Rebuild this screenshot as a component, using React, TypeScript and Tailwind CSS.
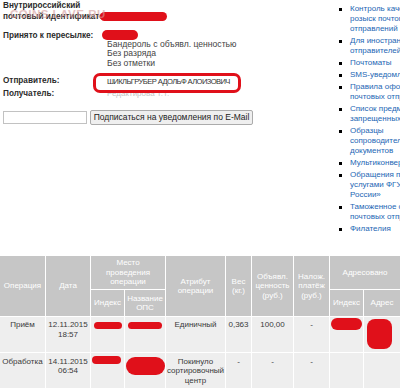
import React from "react";

const links: string[][] = [
  ["Контроль качества и", "розыск почтовых", "отправлений"],
  ["Для иностранных", "отправителей"],
  ["Почтоматы"],
  ["SMS-уведомления"],
  ["Правила оформления", "почтовых отправлений"],
  ["Список предметов,", "запрещенных к пересылке"],
  ["Образцы", "сопроводительных", "документов"],
  ["Мультиконверт"],
  ["Обращения по", "услугами ФГУП «Почта", "России»"],
  ["Таможенное оформление", "почтовых отправлений"],
  ["Филателия"],
];

const head = "bg-[#c6c6c6] text-white font-normal text-center align-middle leading-[9.5px] p-0";
const cell = "bg-[#eeeeee] text-[#3a3a3a] text-center align-top leading-[9.5px] p-0";
const red = "bg-[#e0101a]";

export default function App() {
  return (
    <div className="w-[400px] h-[390px] overflow-hidden bg-white font-['Liberation_Sans',Arial,sans-serif] text-[8px] text-[#2b2b2b]">
      <div className="flex">
        {/* tracking details */}
        <div className="w-[335px] shrink-0 pl-[3px] relative">
          <div className="flex leading-[11px]">
            <div className="w-[97px] shrink-0 font-bold text-[8.2px] whitespace-nowrap">
              Внутрироссийский
              <br />
              почтовый идентификатор:
            </div>
            <div className="pt-[11.5px]">
              <div className={`w-[67px] h-[9px] rounded-full ${red}`} />
            </div>
          </div>

          <div className="flex mt-[7.5px]">
            <div className="w-[99px] shrink-0 font-bold text-[8.2px] leading-[11px] whitespace-nowrap">Принято к пересылке:</div>
            <div>
              <div className={`w-[36px] h-[10px] rounded-full ${red}`} />
              <div className="pl-[5px] leading-[9.5px] text-[8.6px] text-[#444] whitespace-nowrap">
                Бандероль с объявл. ценностью
                <br />
                Без разряда
                <br />
                Без отметки
              </div>
            </div>
          </div>

          <div className="flex mt-[6.5px]">
            <div className="w-[104px] shrink-0 font-bold text-[8.2px] leading-[11px]">Отправитель:</div>
            <div className="relative pt-[1px] leading-[11px] text-[7.6px] tracking-[-0.6px] text-[#333] whitespace-nowrap">
              ШИКЛЬГРУБЕР АДОЛЬФ АЛОИЗОВИЧ
              <div className="absolute top-[-1.5px] left-[-14px] w-[148px] h-[20px] border-[3px] border-[#e0101a] rounded-[7px]" />
            </div>
          </div>

          <div className="flex mt-[1px]">
            <div className="w-[104px] shrink-0 font-bold text-[8.2px] leading-[11px]">Получатель:</div>
            <div className="leading-[11px] text-[#c4c4c4] whitespace-nowrap">Редактирова Т.Т.</div>
          </div>

          <div className="flex items-center mt-[11.5px]">
            <input className="w-[84px] h-[13px] border border-[#c2c2c2] bg-white outline-none" />
            <button className="ml-[3px] w-[163px] h-[15px] border border-[#ababab] bg-[#efefef] rounded-[2px] text-[8.5px] leading-[13px] text-[#222]">
              Подписаться на уведомления по E-Mail
            </button>
          </div>

          <div className="absolute left-[10px] top-[7px] text-[11.5px] leading-[14px] font-bold tracking-[0.5px] text-[#d49a9a] opacity-60 pointer-events-none">
            COINS.LAVE.RU
          </div>
        </div>

        {/* side menu */}
        <ul className="w-[130px] shrink-0 pt-[4px]">
          {links.map((lines, i) => (
            <li key={i} className="flex mb-[2px] leading-[10px]">
              <span className="w-[3px] h-[3px] bg-black mt-[4px] ml-[4px] mr-[8px] shrink-0" />
              <span className="text-[#2366b4] whitespace-nowrap">
                {lines.map((l, j) => (
                  <React.Fragment key={j}>
                    {j > 0 && <br />}
                    {l}
                  </React.Fragment>
                ))}
              </span>
            </li>
          ))}
        </ul>
      </div>

      <table className="table-fixed border-separate border-spacing-[1px] w-[402px] -ml-[1px] mt-[19px]">
        <colgroup>
          <col className="w-[45px]" />
          <col className="w-[44px]" />
          <col className="w-[33px]" />
          <col className="w-[40px]" />
          <col className="w-[59px]" />
          <col className="w-[25px]" />
          <col className="w-[41px]" />
          <col className="w-[35px]" />
          <col className="w-[33px]" />
          <col className="w-[36px]" />
        </colgroup>
        <thead>
          <tr className="h-[33px]">
            <th rowSpan={2} className={head}>Операция</th>
            <th rowSpan={2} className={head}>Дата</th>
            <th colSpan={2} className={head}>
              Место
              <br />
              проведения
              <br />
              операции
            </th>
            <th rowSpan={2} className={head}>
              Атрибут
              <br />
              операции
            </th>
            <th rowSpan={2} className={head}>
              Вес
              <br />
              (кг.)
            </th>
            <th rowSpan={2} className={head}>
              Объявл.
              <br />
              ценность
              <br />
              (руб.)
            </th>
            <th rowSpan={2} className={head}>
              Налож.
              <br />
              платёж
              <br />
              (руб.)
            </th>
            <th colSpan={2} className={head}>Адресовано</th>
          </tr>
          <tr className="h-[26px]">
            <th className={head}>Индекс</th>
            <th className={head}>
              Название
              <br />
              ОПС
            </th>
            <th className={head}>Индекс</th>
            <th className={head}>Адрес</th>
          </tr>
        </thead>
        <tbody>
          <tr className="h-[35px]">
            <td className={`${cell} pt-[3px]`}>Приём</td>
            <td className={`${cell} pt-[3px]`}>
              12.11.2015
              <br />
              18:57
            </td>
            <td className={cell}>
              <div className={`mx-auto mt-[5px] w-[28px] h-[7px] rounded-full ${red}`} />
            </td>
            <td className={cell}>
              <div className={`mx-auto mt-[5px] w-[34px] h-[7px] rounded-full ${red}`} />
            </td>
            <td className={`${cell} pt-[3px]`}>Единичный</td>
            <td className={`${cell} pt-[3px]`}>0,363</td>
            <td className={`${cell} pt-[3px]`}>100,00</td>
            <td className={`${cell} pt-[3px]`}>-</td>
            <td className={cell}>
              <div className={`mx-auto mt-[1px] w-[31px] h-[12px] rounded-full ${red}`} />
            </td>
            <td className={cell}>
              <div className={`ml-[3px] mt-[2px] w-[25px] h-[30px] rounded-[8px] ${red}`} />
            </td>
          </tr>
          <tr className="h-[35px]">
            <td className={`${cell} pt-[3.5px]`}>Обработка</td>
            <td className={`${cell} pt-[3.5px]`}>
              14.11.2015
              <br />
              06:54
            </td>
            <td className={cell}>
              <div className={`ml-[1px] mt-[3px] w-[29px] h-[8px] rounded-full ${red}`} />
            </td>
            <td className={cell}>
              <div className={`ml-[1px] mt-[4px] w-[39px] h-[18px] rounded-[9px] ${red}`} />
            </td>
            <td className={`${cell} pt-[3.5px]`}>
              Покинуло
              <br />
              сортировочный
              <br />
              центр
            </td>
            <td className={`${cell} pt-[3.5px]`}>-</td>
            <td className={`${cell} pt-[3.5px]`}>-</td>
            <td className={`${cell} pt-[3.5px]`}>-</td>
            <td className={cell} />
            <td className={cell} />
          </tr>
        </tbody>
      </table>
    </div>
  );
}
